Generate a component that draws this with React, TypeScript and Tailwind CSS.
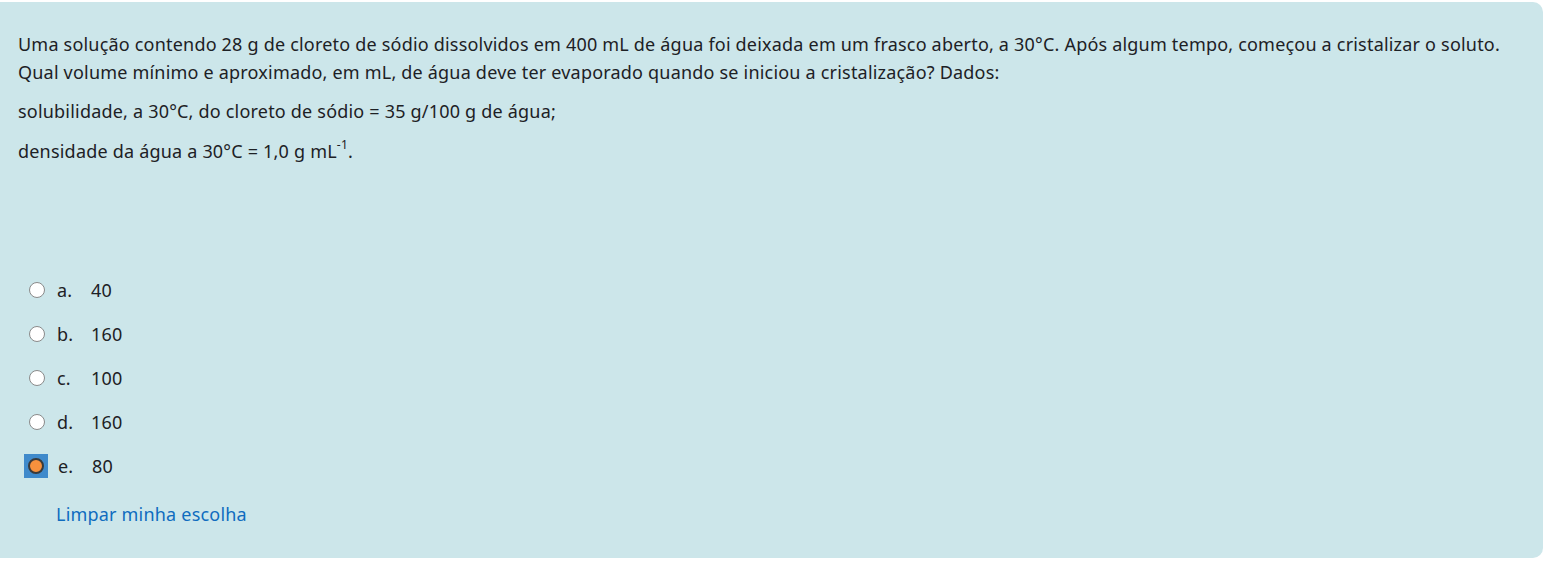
import React from "react";

const options = [
  { l: "a.", v: "40" },
  { l: "b.", v: "160" },
  { l: "c.", v: "100" },
  { l: "d.", v: "160" },
  { l: "e.", v: "80", checked: true },
];

export default function App() {
  return (
    <div className="w-[1543px] h-[565px] bg-white" style={{ fontFamily: '"Noto Sans", sans-serif' }}>
      <div className="relative top-[2px] -ml-[20px] w-[1563px] h-[556px] bg-[#cce6ea] rounded-[10px] pl-[38px] pt-[28px] text-[#1d2125] text-[18px] tracking-[0.2px]">
        <p className="leading-[28px]">
          Uma solução contendo 28 g de cloreto de sódio dissolvidos em 400 mL de água foi deixada em um frasco aberto, a 30°C. Após algum tempo, começou a cristalizar o soluto.
          <br />
          Qual volume mínimo e aproximado, em mL, de água deve ter evaporado quando se iniciou a cristalização? Dados:
        </p>
        <p className="leading-[28px] mt-[11px]">solubilidade, a 30°C, do cloreto de sódio = 35 g/100 g de água;</p>
        <p className="leading-[28px] mt-[12px]">
          densidade da água a 30°C = 1,0 g mL<sup className="text-[12px] align-baseline relative top-[-9px]">-1</sup>.
        </p>
        <div className="mt-[111px] flex flex-col gap-[16px] pl-[11px]">
          {options.map((o, i) => (
            <div key={i} className="flex items-center h-[28px]">
              {o.checked ? (
                <span className="w-[24px] h-[24px] -ml-[5px] mr-[10px] bg-[#3f8acb] flex items-center justify-center">
                  <span className="w-[16px] h-[16px] rounded-full bg-[#f7913d] border-[2px] border-[#3a3a3a]" />
                </span>
              ) : (
                <span className="w-[16px] h-[16px] mr-[12px] rounded-full bg-white border border-[#8a8a8a]" />
              )}
              <span className="w-[34px]">{o.l}</span>
              <span>{o.v}</span>
            </div>
          ))}
        </div>
        <div className="mt-[21px] pl-[38px] text-[#0f6cbf]">Limpar minha escolha</div>
      </div>
    </div>
  );
}
